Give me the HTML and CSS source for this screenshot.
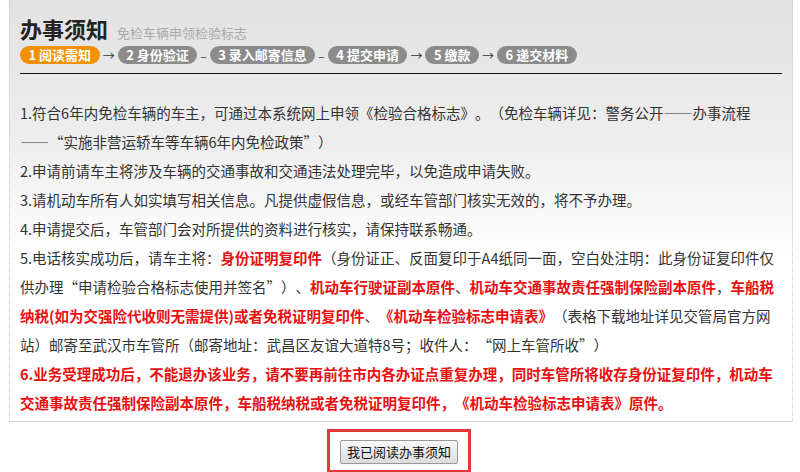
FILE: index.html
```html
<!DOCTYPE html>
<html lang="zh-CN">
<head>
    <meta charset="UTF-8">
    <title>办事须知</title>
    <link rel="stylesheet" href="styles.css">
</head>
<body>
    <div class="notice">
        <div class="head">
            <h2>办事须知</h2>
            <span class="sub">免检车辆申领检验标志</span>
        </div>
        <div class="steps">
            <span class="step active">1 阅读需知</span>
            <span class="arrow">→</span>
            <span class="step">2 身份验证</span>
            <span class="arrow">–</span>
            <span class="step">3 录入邮寄信息</span>
            <span class="arrow">–</span>
            <span class="step">4 提交申请</span>
            <span class="arrow">→</span>
            <span class="step">5 缴款</span>
            <span class="arrow">→</span>
            <span class="step">6 递交材料</span>
        </div>

        <div class="content">
            <p>1.符合6年内免检车辆的车主，可通过本系统网上申领《检验合格标志》。（免检车辆详见：警务公开——办事流程——<span class="fw">“</span>实施非营运轿车等车辆6年内免检政策<span class="fw">”</span>）</p>
            <p>2.申请前请车主将涉及车辆的交通事故和交通违法处理完毕，以免造成申请失败。</p>
            <p>3.请机动车所有人如实填写相关信息。凡提供虚假信息，或经车管部门核实无效的，将不予办理。</p>
            <p>4.申请提交后，车管部门会对所提供的资料进行核实，请保持联系畅通。</p>
            <p>5.电话核实成功后，请车主将：<b>身份证明复印件</b>（身份证正、反面复印于A4纸同一面，空白处注明：此身份证复印件仅供办理<span class="fw">“</span>申请检验合格标志使用并签名<span class="fw">”</span>）、<b>机动车行驶证副本原件</b>、<b>机动车交通事故责任强制保险副本原件</b>，<b>车船税纳税(如为交强险代收则无需提供)或者免税证明复印件</b>、<b>《机动车检验标志申请表》</b>（表格下载地址详见交管局官方网站）邮寄至武汉市车管所（邮寄地址：武昌区友谊大道特8号；收件人：<span class="fw">“</span>网上车管所收<span class="fw">”</span>）</p>
            <p class="warn">6.业务受理成功后，不能退办该业务，请不要再前往市内各办证点重复办理，同时车管所将收存身份证复印件，机动车交通事故责任强制保险副本原件，车船税纳税或者免税证明复印件，《机动车检验标志申请表》原件。</p>
        </div>
    </div>

    <div class="actions">
        <div class="mark">
            <button type="button">我已阅读办事须知</button>
        </div>
    </div>
</body>
</html>
```

FILE: styles.css
```css
/* Página */
body {
    margin: 0;
    padding: 0;
    background: #fff;
    font-family: "Noto Sans CJK SC", "Liberation Sans", sans-serif;
    color: #333;
    text-spacing-trim: space-all;
}

/* Caja de aviso */
.notice {
    margin: 0 7px 0 9px;
    padding: 12px 10px 4px 10px;
    border: 1px dotted #c8c8c8;
    border-top: none;
    background: linear-gradient(to bottom, #e2e2e2 0, #eeeeee 140px, #fff 260px);
}

.head {
    display: flex;
    align-items: baseline;
    gap: 9px;
}

h2 {
    margin: 0;
    font-size: 22px;
    line-height: 33px;
    font-weight: bold;
    color: #222;
}

.sub {
    font-size: 13px;
    color: #aaa;
}

/* Pasos */
.steps {
    display: flex;
    align-items: center;
    gap: 3px;
    margin-top: 1px;
    padding-bottom: 9px;
    border-bottom: 1px solid #111;
}

.step {
    display: inline-block;
    height: 18px;
    line-height: 18px;
    padding: 0 8.5px;
    border-radius: 9px;
    background: #8c8c8c;
    color: #fff;
    font-size: 13px;
    font-weight: bold;
    white-space: nowrap;
}

.step.active {
    background: #f29100;
}

.arrow {
    font-size: 12px;
    color: #333;
}

/* Contenido */
.content {
    padding: 24px 8px 0 0;
    font-size: 14.5px;
    line-height: 29px;
}

.content p {
    margin: 0;
}

.content b {
    color: #e81010;
}

.content .warn {
    color: #e81010;
    font-weight: bold;
}

.fw {
    font-variant-east-asian: full-width;
}

/* Botón */
.actions {
    display: flex;
    justify-content: center;
    padding-top: 7px;
    padding-right: 2px;
}

.mark {
    border: 3px solid #e03a3a;
    padding: 6px 10px;
}

button {
    font-family: "Noto Sans CJK SC", sans-serif;
    font-size: 13px;
    padding: 0 6px;
    height: 24px;
    border: 1px solid #999;
    border-radius: 2px;
    background: linear-gradient(to bottom, #f8f8f8, #dcdcdc);
    color: #111;
}
```
